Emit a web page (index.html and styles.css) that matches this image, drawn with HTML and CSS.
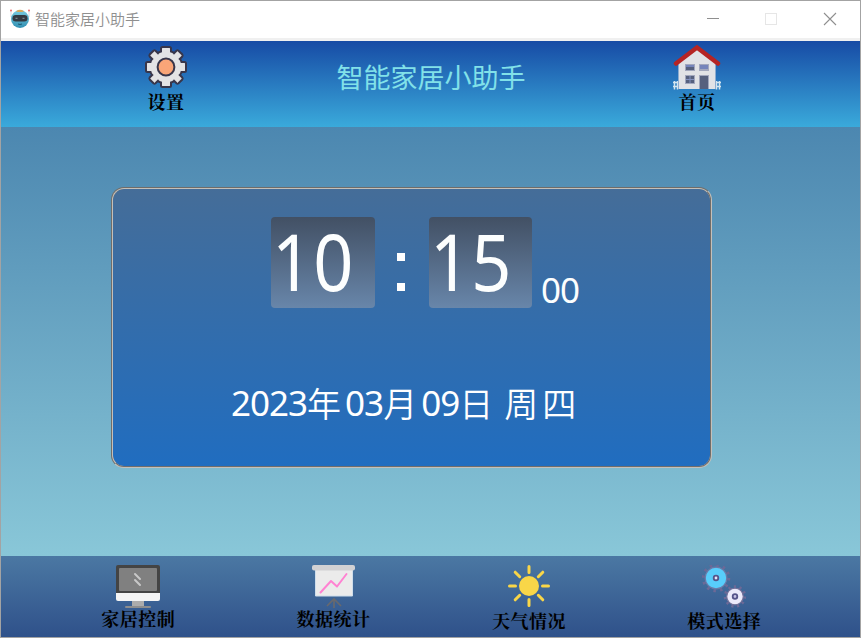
FILE: index.html
```html
<!DOCTYPE html>
<html lang="zh-CN">
<head>
<meta charset="utf-8">
<title>智能家居小助手</title>
<link rel="stylesheet" href="styles.css">
</head>
<body>
<div class="window">
  <div class="titlebar">
    <svg class="app-icon" width="20" height="20" viewBox="0 0 20 20">
      <defs><linearGradient id="bot" x1="0" y1="0" x2="0" y2="1"><stop offset="0" stop-color="#79cbe0"/><stop offset="1" stop-color="#3190b3"/></linearGradient></defs>
      <path d="M1 2v6M19 2v6" stroke="#d5dce0"/>
      <circle cx="1" cy="1.5" r="1" fill="#ee6969"/><circle cx="19" cy="1.5" r="1" fill="#ee6969"/>
      <circle cx="10" cy="10" r="9" fill="url(#bot)"/>
      <path d="M6 2.2Q10-.5 14 2.2L12.5 3h-5z" fill="#d6a85c"/>
      <rect x="2.5" y="6" width="15" height="6.5" rx="3.2" fill="#333941"/>
      <path d="M5.5 9.3h2M12.5 9.3h2" stroke="#78858c" stroke-width="1.2"/>
      <path d="M8 15q2 1 4 0" fill="none" stroke="#205a72"/>
    </svg>
    <span class="caption">智能家居小助手</span>
    <svg class="controls" width="132" height="14" viewBox="0 0 132 14" fill="none">
      <path d="M1 6.5h12" stroke="#8f8f8f"/>
      <rect x="59.5" y="1.5" width="11" height="11" stroke="#e6e6e6"/>
      <path d="M118 1l12 12M130 1l-12 12" stroke="#8f8f8f" stroke-width="1.1"/>
    </svg>
  </div>

  <header class="header">
    <div class="nav-item nav-settings">
      <svg width="42" height="42" viewBox="-21 -21 42 42">
        <path d="M-3.500-20H3.500Q5-20 5-18.500V-15.500Q7-15 8-13.800L10.500-16.300Q11.500-17 12.500-16.300L16.300-12.500Q17-11.500 16.300-10.500L13.800-8Q15-7 15.500-5H18.500Q20-5 20-3.500V3.500Q20 5 18.500 5H15.500Q15 7 13.800 8L16.300 10.500Q17 11.500 16.300 12.500L12.500 16.300Q11.500 17 10.500 16.300L8 13.800Q7 15 5 15.500V18.500Q5 20 3.500 20H-3.500Q-5 20-5 18.500V15.500Q-7 15-8 13.800L-10.500 16.300Q-11.500 17-12.500 16.300L-16.300 12.500Q-17 11.500-16.300 10.500L-13.800 8Q-15 7-15.500 5H-18.500Q-20 5-20 3.500V-3.500Q-20-5-18.500-5H-15.500Q-15-7-13.800-8L-16.300-10.500Q-17-11.500-16.300-12.500L-12.500-16.300Q-11.500-17-10.500-16.300L-8-13.800Q-7-15-5-15.500V-18.500Q-5-20-3.500-20Z" fill="#e3e3e5" stroke="#38364b" stroke-width="2"/>
        <circle r="8.400" fill="#f9a578" stroke="#38364b" stroke-width="2"/>
      </svg>
      <span class="label">设置</span>
    </div>
    <h1 class="title">智能家居小助手</h1>
    <div class="nav-item nav-home">
      <svg width="48" height="46" viewBox="0 0 48 46">
        <path d="M0 38.500h6M0 42.500h6M1.500 37v8.500M4.500 37v8.500M42 38.500h6M42 42.500h6M43.500 37v8.500M46.500 37v8.500" stroke="#d4e5ef" stroke-width="1.500"/>
        <path d="M6 18L24 5l18 13v27H6z" fill="#e1e2e6"/>
        <path d="M5.500 20v25M42.500 20v25" stroke="#8cacd0"/>
        <path d="M3 19.500L24 3.500l21 16" fill="none" stroke="#b52424" stroke-width="4.500" stroke-linecap="round" stroke-linejoin="miter"/>
        <path d="M12 20h10v7H12zM26 20h10v7H26zM12 31h10v9H12zM26 31h10v14H26z" fill="#a2a7bd"/>
        <path d="M13 21h8v5h-8zM13 32h8v7h-8zM27 32h8v13h-8z" fill="#56607e"/>
        <path d="M13 21h8v2h-8zM27 21h8v4h-8z" fill="#7584bb"/>
        <path d="M17 32v7M13 35.500h8" stroke="#8391bf"/>
      </svg>
      <span class="label">首页</span>
    </div>
  </header>

  <main class="main">
    <section class="card">
      <div class="clock">
        <div class="digits"><span>10</span></div>
        <div class="colon"><i></i><i></i></div>
        <div class="digits minutes"><span>15</span></div>
        <div class="seconds">00</div>
      </div>
      <div class="date">
        <span class="num">2023</span><span>年</span><span class="num">03</span><span>月</span><span class="num">09</span><span>日</span><span class="weekday">周四</span>
      </div>
    </section>
  </main>

  <footer class="footer">
    <div class="nav-item">
      <svg width="44" height="44" viewBox="0 0 44 44">
        <path d="M16 35h12v6H16z" fill="#acacac"/>
        <rect x="9" y="41" width="26" height="2" rx="1" fill="#8e8e8e"/>
        <path d="M0 27h44v7q0 2-2 2H2q-2 0-2-2z" fill="#f4f4f4"/>
        <path d="M2 0h40q2 0 2 2v26H0V2q0-2 2-2z" fill="#444"/>
        <rect x="3" y="3" width="38" height="23" rx="1" fill="#808080"/>
        <path d="M19 9l5 5M19 15l5 5" stroke="#c8c8c8" stroke-width="2" stroke-linecap="round"/>
      </svg>
      <span class="label">家居控制</span>
    </div>
    <div class="nav-item">
      <svg width="44" height="44" viewBox="1 0 44 44">
        <path d="M23 43v-8M16 41l7-7 7 7" fill="none" stroke="#68696e" stroke-width="1.700"/>
        <path d="M4.500 4h37v27h-37z" fill="#ebebeb" stroke="#ceddeb"/>
        <rect x="1" y="0" width="43" height="5.500" rx="2" fill="#d1d1d3"/>
        <path d="M9.500 27.500L20 16l6 5.500L35.500 9" fill="none" stroke="#ff82d2" stroke-width="2" stroke-linecap="round" stroke-linejoin="round"/>
      </svg>
      <span class="label">数据统计</span>
    </div>
    <div class="nav-item nav-low">
      <svg width="44" height="44" viewBox="-22 -21 44 44">
        <circle r="10" fill="#f9d648"/>
        <path d="M0-19.500v6M0 13.500v6M-19.500 0h6M13.500 0h6M-13.800-13.800l4.500 4.500M9.300 9.300l4.500 4.500M13.800-13.800l-4.500 4.500M-9.300 9.300l-4.500 4.500" stroke="#f9d648" stroke-width="3" stroke-linecap="round"/>
      </svg>
      <span class="label">天气情况</span>
    </div>
    <div class="nav-item nav-low">
      <svg width="44" height="44" viewBox="0 1 44 44">
        <circle cx="14" cy="14" r="12.800" fill="none" stroke="#6c6997" stroke-width="3" stroke-dasharray="2.500 4.200"/>
        <circle cx="14" cy="14" r="10.800" fill="#58cdfb" stroke="#6a79a7" stroke-width="1.200"/>
        <circle cx="14" cy="14" r="2.300" fill="#e5e3f6" stroke="#555389" stroke-width="1.800"/>
        <circle cx="33" cy="32.500" r="10" fill="none" stroke="#6c6997" stroke-width="2.600" stroke-dasharray="2.200 3.510"/>
        <circle cx="33" cy="32.500" r="8.300" fill="#ebe9fa" stroke="#737099" stroke-width="1.200"/>
        <circle cx="33" cy="32.500" r="2.300" fill="#c7c2e6" stroke="#555389" stroke-width="1.800"/>
      </svg>
      <span class="label">模式选择</span>
    </div>
  </footer>
</div>
</body>
</html>
```
FILE: styles.css
```css
* { box-sizing: border-box; }
body {
  margin: 0;
  font-family: "Noto Sans CJK SC", sans-serif;
}
svg { display: block; flex: none; }
.window {
  width: 861px;
  height: 638px;
  display: flex;
  flex-direction: column;
  overflow: hidden;
  border: 1px solid #a3a3a3;
}
.titlebar {
  height: 40px;
  display: flex;
  align-items: center;
  padding: 2px 22px 3px 9px;
  background: #fff;
  border-bottom: 3px solid #f0f0f0;
}
.caption {
  margin-left: 5px;
  font-size: 15px;
  line-height: 20px;
  font-weight: 350;
  color: #8f8f8f;
}
.controls { margin-left: auto; }
.header {
  height: 86px;
  display: grid;
  grid-template-columns: 330px 200px 329px;
  background: linear-gradient(#174ba5, #3aaadb);
}
.nav-item {
  display: flex;
  flex-direction: column;
  align-items: center;
}
.label {
  font-family: "Noto Serif CJK SC", "Noto Sans CJK SC", serif;
  font-size: 18px;
  line-height: 20px;
  font-weight: 700;
  color: #000;
  letter-spacing: 0.5px;
}
.nav-settings { padding-top: 5px; }
.nav-settings .label { margin-top: 3px; }
.nav-home { padding: 3px 0 0 3px; }
.nav-home .label { margin-top: 1px; }
.title {
  margin: 16px 0 0;
  text-align: center;
  white-space: nowrap;
  font-size: 27px;
  line-height: 40px;
  font-weight: 400;
  color: #81e1e9;
}
.main {
  height: 429px;
  padding: 60px 148px 0 110px;
  background: linear-gradient(#4c87b0, #89c7d8);
}
.card {
  height: 281px;
  padding-top: 28px;
  border: 2px groove #c4c0ba;
  border-radius: 13px;
  background: linear-gradient(#456d98, #206dc0) border-box;
}
.clock {
  display: flex;
  height: 91px;
  padding-left: 158px;
  color: #fcfefe;
  font-family: "Noto Sans", sans-serif;
}
.digits {
  width: 104px;
  padding-left: 1px;
  border-radius: 4px;
  background: linear-gradient(#425064, #6886aa);
  font-size: 78px;
  line-height: 88px;
  letter-spacing: 1.2px;
}
.digits span {
  display: block;
  transform: scaleX(0.9);
  transform-origin: left;
}
.minutes { width: 103px; }
.colon {
  width: 54px;
  padding: 36px 0 17px 22px;
  display: flex;
  flex-direction: column;
  justify-content: space-between;
}
.colon i {
  width: 8px;
  height: 8px;
  background: #fff;
}
.seconds {
  margin: 48px 0 0 9px;
  font-size: 35px;
  line-height: 50px;
  letter-spacing: -1px;
}
.date {
  display: flex;
  margin: 65px 0 0 118px;
  font-size: 34px;
  line-height: 60px;
  font-weight: 350;
  letter-spacing: 4px;
  white-space: nowrap;
  color: #fff;
}
.num {
  font-family: "Noto Sans", sans-serif;
  font-size: 35px;
  font-weight: 400;
  letter-spacing: -1px;
}
.weekday { margin-left: 7px; }
.footer {
  flex: 1;
  display: grid;
  grid-template-columns: repeat(4, 195.4px);
  padding: 9px 0 0 39.5px;
  background: linear-gradient(#4b78a3, #2f518a);
}
.footer .label { margin-top: -1px; }
.footer .nav-low .label { margin-top: 1px; }
```
